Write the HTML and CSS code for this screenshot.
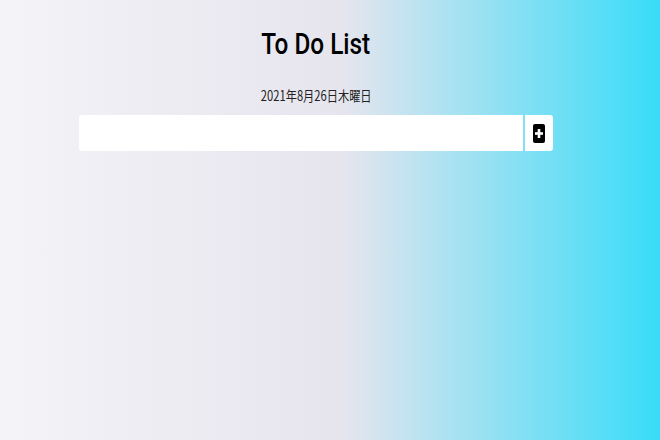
FILE: index.html
```html
<!DOCTYPE html>
<html lang="ja">
<head>
<meta charset="utf-8">
<title>To Do List</title>
<link rel="stylesheet" href="styles.css">
</head>
<body>
<main class="page">
  <h1 class="title"><span class="squeeze">To Do List</span></h1>
  <p class="date"><span class="squeeze">2021年8月26日木曜日</span></p>
  <form class="add-form">
    <input class="add-input" type="text" aria-label="新しいタスク">
    <button class="add-btn" type="button" aria-label="追加">
      <svg class="plus-icon" width="12" height="19" viewBox="0 0 12 19">
        <rect x="0" y="0" width="12" height="19" rx="2" fill="#000"/>
        <rect x="4.7" y="5" width="2.6" height="9" fill="#fff"/>
        <rect x="2" y="8.2" width="8" height="2.6" fill="#fff"/>
      </svg>
    </button>
  </form>
</main>
</body>
</html>
```

FILE: styles.css
```css
html, body {
  margin: 0;
  height: 100%;
}
body {
  background: linear-gradient(to right, #f4f3f7 0%, #e6e5ee 52%, #38dcf8 100%);
  font-family: Roboto, "Noto Sans CJK JP", sans-serif;
  color: #111;
}
.page {
  display: flex;
  flex-direction: column;
  align-items: center;
  padding: 0 28px 0 0;
}
.squeeze {
  display: inline-block;
  transform: scaleX(0.8);
}
.title .squeeze {
  transform: scaleX(0.84);
}
.title {
  margin: 26px 0 0;
  font-size: 29px;
  font-weight: 500;
  line-height: 36px;
  color: #000;
}
.date {
  margin: 23px 0 0;
  font-family: "Noto Sans CJK JP", sans-serif;
  font-size: 14px;
  line-height: 20px;
  color: #222;
}
.add-form {
  display: flex;
  gap: 2px;
  margin-top: 10px;
  width: 474px;
  height: 36px;
}
.add-input {
  flex: 1;
  border: 0;
  border-radius: 3px 0 0 3px;
  background: #fff;
  padding: 0 8px;
  outline: none;
}
.add-btn {
  width: 28px;
  border: 0;
  border-radius: 0 3px 3px 0;
  background: #fff;
  padding: 0;
  display: flex;
  align-items: center;
  justify-content: center;
}
.plus-icon {
  display: block;
}
```
